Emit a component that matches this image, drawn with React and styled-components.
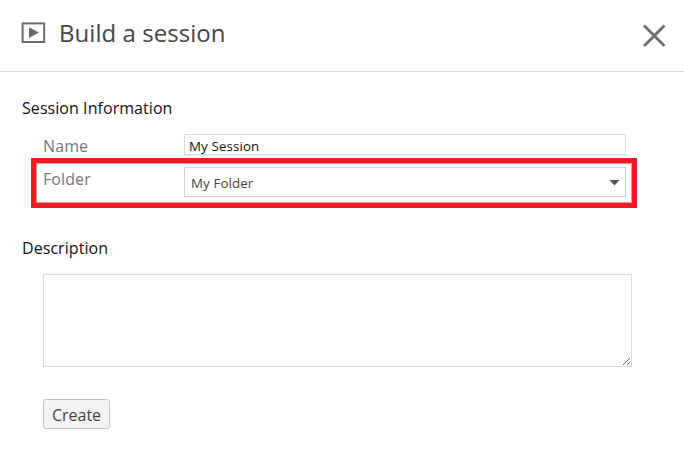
import React from 'react';
import styled, { createGlobalStyle } from 'styled-components';

const GlobalStyle = createGlobalStyle`
  * {
    box-sizing: border-box;
  }

  body {
    margin: 0;
    background: #fff;
    font-family: 'Open Sans', 'Noto Sans', sans-serif;
  }
`;

const Dialog = styled.div`
  width: 684px;
  height: 456px;
  overflow: hidden;
`;

const Header = styled.header`
  height: 72px;
  padding: 0 18px 0 21px;
  border-bottom: 1px solid #dcdcdc;
  display: flex;
  align-items: flex-start;
`;

const SessionIcon = styled.svg`
  width: 25px;
  height: 21px;
  margin-top: 22px;
  flex: none;
`;

const Title = styled.h1`
  flex: 1;
  margin: 16px 0 0 13px;
  color: #444;
  font-size: 24px;
  font-weight: 400;
  line-height: 34px;
  letter-spacing: 0.05px;
`;

const CloseButton = styled.button`
  width: 24px;
  height: 24px;
  margin-top: 24px;
  padding: 0;
  border: 0;
  background: none;

  svg {
    display: block;
  }
`;

const Content = styled.main`
  padding: 25px 52px 0 22px;
`;

const SectionTitle = styled.h2`
  margin: 0;
  color: #111;
  font-size: 16px;
  font-weight: 400;
  line-height: 22px;
  letter-spacing: 0.06px;
`;

const Fields = styled.div`
  margin: 15px 0 39px 21px;
`;

const Field = styled.div`
  position: relative;
  display: flex;
  align-items: flex-start;
  height: ${(props) => props.$height};
`;

const Label = styled.label`
  width: 141px;
  color: #777;
  font-size: 16px;
  line-height: ${(props) => props.$lineHeight};
  letter-spacing: 0.1px;
`;

const NameInput = styled.input`
  width: 442px;
  height: 21px;
  padding: 2px 4px 0;
  border: 1px solid #dcdcdc;
  outline: 0;
  color: #111;
  font-family: inherit;
  font-size: 13.33px;
  letter-spacing: 0.12px;
`;

const Select = styled.div`
  width: 442px;
  height: 30px;
  padding: 2px 5px 0 6px;
  border: 1px solid #d2d2d2;
  display: flex;
  align-items: center;
  justify-content: space-between;
  color: #444;
  font-size: 13.33px;
  letter-spacing: 0.1px;
`;

const Caret = styled.span`
  width: 11px;
  height: 6px;
  margin-bottom: 1px;
  background: #555;
  clip-path: polygon(0 0, 100% 0, 50% 100%);
`;

const Highlight = styled.div`
  position: absolute;
  top: -9px;
  left: -12px;
  width: 606px;
  height: 50px;
  border: 5px solid #ed1c24;
  box-shadow: inset 0 0 0 1px rgba(237, 28, 36, 0.5);
  pointer-events: none;
`;

const Description = styled.textarea`
  display: block;
  width: 589px;
  height: 93px;
  margin: 15px 0 32px 21px;
  border: 1px solid #dcdcdc;
  outline: 0;
  resize: both;
`;

const CreateButton = styled.button`
  width: 67px;
  height: 30px;
  margin-left: 21px;
  padding: 1px 0 0;
  border: 1px solid #c4c4c4;
  border-radius: 3px;
  background: #f4f4f4;
  color: #444;
  font-family: inherit;
  font-size: 16px;
  line-height: 26px;
`;

const App = () => {
  return (
    <Dialog>
      <GlobalStyle />
      <Header>
        <SessionIcon viewBox="0 0 25 21">
          <rect x="1.6" y="1.4" width="21.6" height="18.6" fill="none" stroke="#6b6b6b" strokeWidth="2" />
          <path d="M8 5.2 L18 10.6 L8 16 Z" fill="#6b6b6b" />
        </SessionIcon>
        <Title>Build a session</Title>
        <CloseButton aria-label="Close">
          <svg width="24" height="24" viewBox="0 0 24 24">
            <path d="M2 1.5 L22.5 22 M22.5 1.5 L2 22" stroke="#707070" strokeWidth="3" />
          </svg>
        </CloseButton>
      </Header>
      <Content>
        <SectionTitle>Session Information</SectionTitle>
        <Fields>
          <Field $height="33px">
            <Label htmlFor="name" $lineHeight="24px">Name</Label>
            <NameInput id="name" defaultValue="My Session" />
          </Field>
          <Field $height="31px">
            <Label $lineHeight="25px">Folder</Label>
            <Select>
              My Folder
              <Caret />
            </Select>
            <Highlight />
          </Field>
        </Fields>
        <SectionTitle>Description</SectionTitle>
        <Description aria-label="Description" />
        <CreateButton>Create</CreateButton>
      </Content>
    </Dialog>
  );
};

export default App;
